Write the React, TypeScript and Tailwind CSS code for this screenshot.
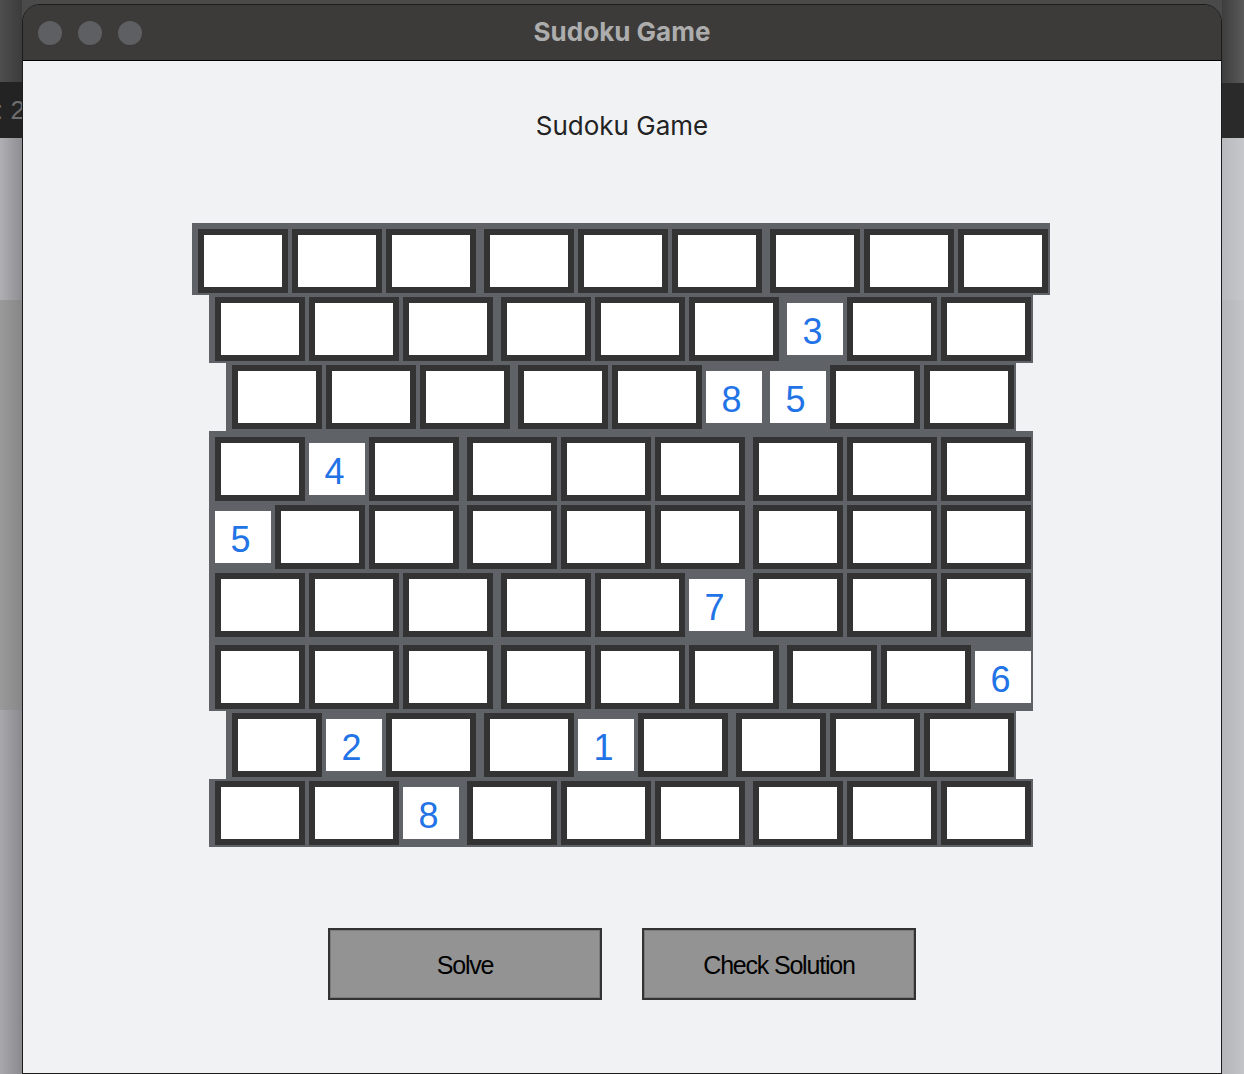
import React from 'react';

// 0 = empty entry, otherwise a given number
const board: number[][] = [
  [0, 0, 0, 0, 0, 0, 0, 0, 0],
  [0, 0, 0, 0, 0, 0, 3, 0, 0],
  [0, 0, 0, 0, 0, 8, 5, 0, 0],
  [0, 4, 0, 0, 0, 0, 0, 0, 0],
  [5, 0, 0, 0, 0, 0, 0, 0, 0],
  [0, 0, 0, 0, 0, 7, 0, 0, 0],
  [0, 0, 0, 0, 0, 0, 0, 0, 6],
  [0, 2, 0, 0, 1, 0, 0, 0, 0],
  [0, 0, 8, 0, 0, 0, 0, 0, 0],
];

const Cell: React.FC<{ value: number; col: number }> = ({ value, col }) => {
  const blockStart = col % 3 === 0;
  if (value) {
    return (
      <div
        className={`${blockStart ? 'ml-[6px]' : 'ml-[2px]'} mr-[2px] my-[2px] w-[56px] h-[52px] pr-[5px] pt-[5px] bg-white flex items-center justify-center text-[36px] leading-none text-[#2273e6] font-['Liberation_Sans',Arial,sans-serif]`}
      >
        {value}
      </div>
    );
  }
  return (
    <div
      className={`${blockStart ? 'ml-[6px]' : 'ml-[2px]'} mr-[2px] my-[2px] w-[90px] h-[64px] border-[6px] border-[#333333] bg-white`}
    />
  );
};

const Board: React.FC = () => (
  <div className="flex flex-col items-center">
    {board.map((row, r) => (
      <div
        key={r}
        className={`flex items-center bg-[#5f6267] ${r % 3 === 0 ? 'pt-[4px]' : ''}`}
      >
        {row.map((v, c) => (
          <Cell key={c} value={v} col={c} />
        ))}
      </div>
    ))}
  </div>
);

const App: React.FC = () => {
  return (
    <div className="w-[1244px] h-[1074px] overflow-hidden flex bg-[#4a4a4a]">
      {/* desktop behind, left side */}
      <div className="w-[22px] flex flex-col shrink-0">
        <div className="h-[82px] bg-gradient-to-r from-[#4e4e4e] to-[#3c3c3c]" />
        <div className="h-[56px] bg-[#232323] text-[#6e6e6e] text-[26px] leading-[56px] font-['Liberation_Sans',Arial,sans-serif] whitespace-nowrap overflow-hidden">
          <span className="ml-[-4px]">: 2</span>
        </div>
        <div className="h-[162px] bg-gradient-to-r from-[#b0b0b4] to-[#8e8e92]" />
        <div className="h-[410px] bg-gradient-to-r from-[#9a9a9a] to-[#878787]" />
        <div className="flex-1 bg-gradient-to-r from-[#a9a9ad] to-[#8a8a8e]" />
      </div>

      {/* window */}
      <div className="w-[1200px] shrink-0 mt-[4px] flex flex-col rounded-t-[18px] border border-[#1c1c1c] overflow-hidden">
        <div className="h-[56px] shrink-0 relative flex items-center bg-[#3c3b39] border-b border-black">
          <div className="flex gap-[16px] pl-[15px]">
            <div className="w-[24px] h-[24px] rounded-full bg-[#5e5f63]" />
            <div className="w-[24px] h-[24px] rounded-full bg-[#5e5f63]" />
            <div className="w-[24px] h-[24px] rounded-full bg-[#5e5f63]" />
          </div>
          <div className="absolute inset-0 pb-[2px] flex items-center justify-center text-[26px] font-bold text-[#adadad] font-['Inter','Noto_Sans',sans-serif]">
            Sudoku Game
          </div>
        </div>

        <div className="flex-1 bg-[#f1f2f4] flex flex-col items-center pt-[49px]">
          <div className="text-[26px] leading-[32px] text-[#232323] font-['Inter','Noto_Sans',sans-serif]">
            Sudoku Game
          </div>
          <div className="mt-[81px] pr-[2px]">
            <Board />
          </div>
          <div className="mt-[81px] flex gap-[40px]">
            <button className="w-[274px] h-[72px] pt-[3px] border-2 border-[#333333] bg-[#939393] shadow-[inset_0_0_0_1px_#7c7c7c] text-[25px] tracking-[-1.2px] text-black font-['Liberation_Sans',Arial,sans-serif]">
              Solve
            </button>
            <button className="w-[274px] h-[72px] pt-[3px] border-2 border-[#333333] bg-[#939393] shadow-[inset_0_0_0_1px_#7c7c7c] text-[25px] tracking-[-1.2px] text-black font-['Liberation_Sans',Arial,sans-serif]">
              Check Solution
            </button>
          </div>
        </div>
      </div>

      {/* desktop behind, right side */}
      <div className="w-[22px] flex flex-col shrink-0">
        <div className="h-[83px] bg-gradient-to-r from-[#3e3e3e] to-[#5a5a5a]" />
        <div className="h-[55px] bg-[#2a2a2a]" />
        <div className="h-[162px] bg-gradient-to-r from-[#b9babe] to-[#c6c7cb]" />
        <div className="flex-1 bg-gradient-to-r from-[#b4b5b9] to-[#c3c4c8]" />
      </div>
    </div>
  );
};

export default App;
